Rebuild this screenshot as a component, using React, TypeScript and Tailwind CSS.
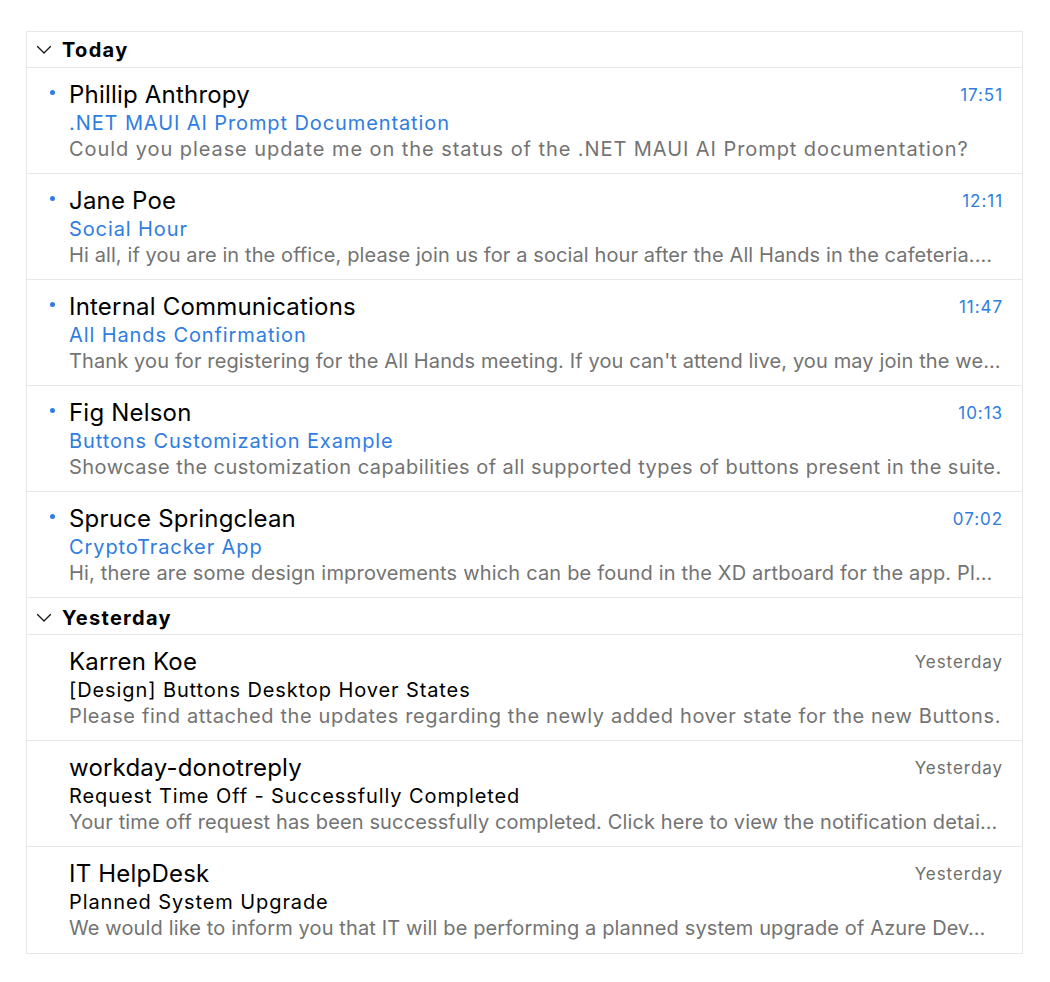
import React from "react";

type Mail = { from: string; subject: string; preview: string; track: string; time: string; unread: boolean };

const today: Mail[] = [
  { from: "Phillip Anthropy", subject: ".NET MAUI AI Prompt Documentation", preview: "Could you please update me on the status of the .NET MAUI AI Prompt documentation?", track: "tracking-[0.93px]", time: "17:51", unread: true },
  { from: "Jane Poe", subject: "Social Hour", preview: "Hi all, if you are in the office, please join us for a social hour after the All Hands in the cafeteria.…", track: "tracking-[0.1px]", time: "12:11", unread: true },
  { from: "Internal Communications", subject: "All Hands Confirmation", preview: "Thank you for registering for the All Hands meeting. If you can't attend live, you may join the we…", track: "tracking-[0.12px]", time: "11:47", unread: true },
  { from: "Fig Nelson", subject: "Buttons Customization Example", preview: "Showcase the customization capabilities of all supported types of buttons present in the suite.", track: "tracking-[0.46px]", time: "10:13", unread: true },
  { from: "Spruce Springclean", subject: "CryptoTracker App", preview: "Hi, there are some design improvements which can be found in the XD artboard for the app. Pl…", track: "tracking-[0.18px]", time: "07:02", unread: true },
];

const yesterday: Mail[] = [
  { from: "Karren Koe", subject: "[Design] Buttons Desktop Hover States", preview: "Please find attached the updates regarding the newly added hover state for the new Buttons.", track: "tracking-[0.62px]", time: "Yesterday", unread: false },
  { from: "workday-donotreply", subject: "Request Time Off - Successfully Completed", preview: "Your time off request has been successfully completed. Click here to view the notification detai…", track: "tracking-[0.13px]", time: "Yesterday", unread: false },
  { from: "IT HelpDesk", subject: "Planned System Upgrade", preview: "We would like to inform you that IT will be performing a planned system upgrade of Azure Dev…", track: "tracking-[0.13px]", time: "Yesterday", unread: false },
];

function Chevron() {
  return (
    <svg width="16" height="10" viewBox="0 0 16 10" fill="none" className="shrink-0">
      <path d="M1.5 1.5 L8 8 L14.5 1.5" stroke="#1a1a1a" strokeWidth="1.4" strokeLinecap="round" strokeLinejoin="round" />
    </svg>
  );
}

function Header({ title, tall }: { title: string; tall?: boolean }) {
  return (
    <div className={"flex items-center border-b border-[#e8e8e8] pl-[9px] " + (tall ? "h-[37px] pt-[3px]" : "h-[36px]")}>
      <Chevron />
      <span className="ml-[10px] text-[20px] font-bold leading-none tracking-[1.3px] text-black">{title}</span>
    </div>
  );
}

function Row({ m, last }: { m: Mail; last: boolean }) {
  return (
    <div className={"relative h-[106px] pl-[42px] pr-[19px] pt-[12px] " + (last ? "" : "border-b border-[#e8e8e8]")}>
      {m.unread && <span className="absolute left-[23px] top-[22px] h-[5px] w-[5px] rounded-full bg-[#2f7de1]" />}
      <div className="flex items-center justify-between">
        <span className="text-[24px] leading-[29px] tracking-[0.2px] text-black">{m.from}</span>
        <span className={"text-[17px] leading-[20px] tracking-[0.95px] " + (m.unread ? "text-[#2f7de1]" : "text-[#6e6e6e]")}>{m.time}</span>
      </div>
      <div className={"text-[20px] leading-[28px] tracking-[0.9px] " + (m.unread ? "text-[#2f7de1]" : "text-black")}>{m.subject}</div>
      <div className={"truncate text-[20px] leading-[25px] text-[#737373] " + m.track}>{m.preview}</div>
    </div>
  );
}

export default function App() {
  return (
    <div className="min-h-screen bg-white pl-[26px] pt-[31px]" style={{ fontFamily: "Inter, 'Noto Sans', sans-serif" }}>
      <div className="w-[997px] border border-[#e8e8e8]">
        <Header title="Today" />
        {today.map((m, i) => (
          <Row key={i} m={m} last={false} />
        ))}
        <Header title="Yesterday" tall />
        {yesterday.map((m, i) => (
          <Row key={i} m={m} last={i === yesterday.length - 1} />
        ))}
      </div>
    </div>
  );
}
